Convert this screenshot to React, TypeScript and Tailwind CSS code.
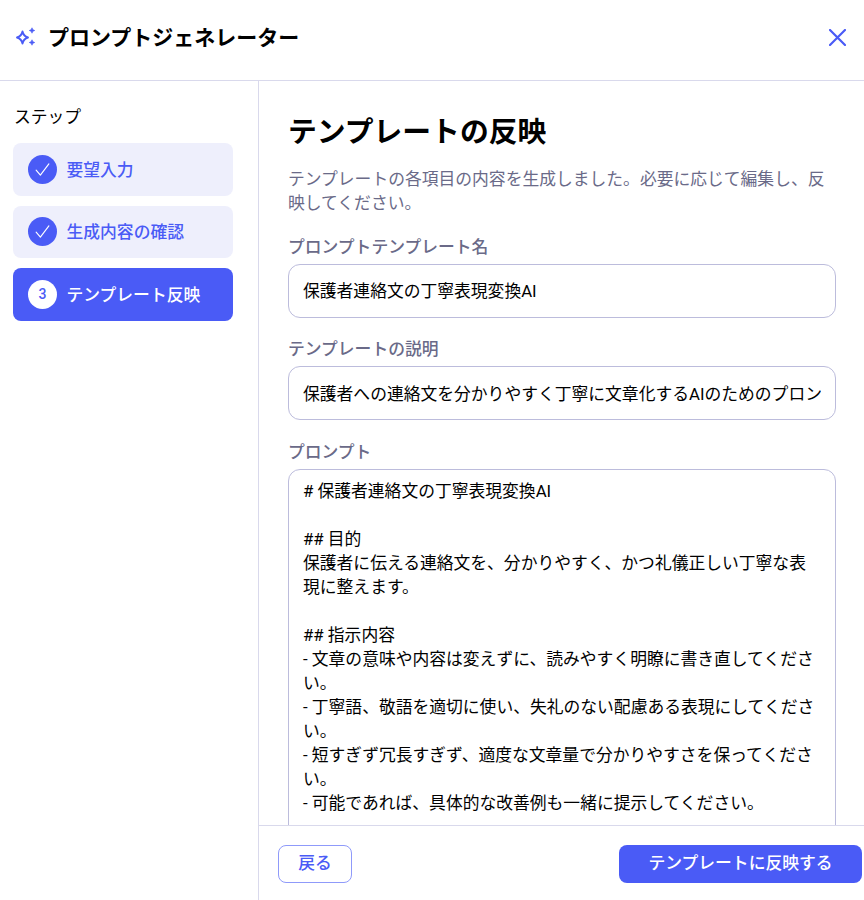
import React from "react";

const FONT = "font-['Roboto','Noto_Sans_CJK_JP',sans-serif]";

const PROMPT = `# 保護者連絡文の丁寧表現変換AI

## 目的
保護者に伝える連絡文を、分かりやすく、かつ礼儀正しい丁寧な表現に整えます。

## 指示内容
- 文章の意味や内容は変えずに、読みやすく明瞭に書き直してください。
- 丁寧語、敬語を適切に使い、失礼のない配慮ある表現にしてください。
- 短すぎず冗長すぎず、適度な文章量で分かりやすさを保ってください。
- 可能であれば、具体的な改善例も一緒に提示してください。

## 入力
{{連絡文}}`;

function Check() {
  return (
    <svg width="17" height="17" viewBox="0 0 24 24" fill="none" stroke="white" strokeWidth="1.6" strokeLinecap="round" strokeLinejoin="round">
      <path d="M3 13l6 7L21 4" />
    </svg>
  );
}

function Step({ label, state, n }: { label: string; state: "done" | "active"; n?: number }) {
  const active = state === "active";
  return (
    <div className={`flex h-[52.5px] items-center gap-[9.5px] rounded-lg pl-[15px] ${active ? "bg-[#4a5bf6] text-white" : "bg-[#eeeffc] text-[#4a5bf6]"}`}>
      <div className={`flex h-[29px] w-[29px] items-center justify-center rounded-full ${active ? "bg-white text-[#4a5bf6]" : "bg-[#4a5bf6]"}`}>
        {active ? <span className="text-[14px] font-medium">{n}</span> : <Check />}
      </div>
      <span className="pt-px text-[16.8px] leading-6 font-medium">{label}</span>
    </div>
  );
}

function Label({ children }: { children: React.ReactNode }) {
  return <label className="mb-[5px] block text-[16.8px] leading-6 font-medium text-[#6a6a88]">{children}</label>;
}

export default function App() {
  return (
    <div className={`flex h-[900px] w-[864px] flex-col overflow-hidden bg-white text-black ${FONT}`}>
      <header className="flex h-[81px] shrink-0 items-center justify-between border-b border-b-[#d9d9ec] pr-[18px] pb-[6px] pl-[15px]">
        <div className="flex items-center gap-[12px]">
          <svg width="21" height="21" viewBox="0 0 21 21" fill="none">
            <path d="M7.5 4.5 C8.2 8.2 9.4 9.4 13 10.5 C9.4 11.6 8.2 12.8 7.5 16.5 C6.8 12.8 5.6 11.6 2 10.5 C5.6 9.4 6.8 8.2 7.5 4.5 Z" stroke="#4a5bf6" strokeWidth="1.9" strokeLinejoin="round" />
            <path d="M17 0.8 C17.4 2.4 17.9 2.9 19.7 3.5 C17.9 4.1 17.4 4.6 17 6.2 C16.6 4.6 16.1 4.1 14.3 3.5 C16.1 2.9 16.6 2.4 17 0.8 Z" fill="#4a5bf6" stroke="#4a5bf6" strokeWidth="0.7" strokeLinejoin="round" />
            <path d="M17 12.8 C17.4 14.4 17.9 14.9 19.7 15.5 C17.9 16.1 17.4 16.6 17 18.2 C16.6 16.6 16.1 16.1 14.3 15.5 C16.1 14.9 16.6 14.4 17 12.8 Z" fill="#4a5bf6" stroke="#4a5bf6" strokeWidth="0.7" strokeLinejoin="round" />
          </svg>
          <h1 className="pt-[2px] text-[21px] leading-none font-bold">プロンプトジェネレーター</h1>
        </div>
        <svg width="17" height="17" viewBox="0 0 17 17" fill="none" stroke="#4a5bf6" strokeWidth="2.2" strokeLinecap="round">
          <path d="M1 1l15 15M16 1L1 16" />
        </svg>
      </header>

      <div className="flex min-h-0 flex-1">
        <aside className="w-[259px] shrink-0 border-r border-r-[#d9d9ec] pt-[24px] pr-[25px] pl-[13px]">
          <div className="mb-[14px] pl-px text-[16.8px] leading-6">ステップ</div>
          <div className="flex flex-col gap-[10px]">
            <Step label="要望入力" state="done" />
            <Step label="生成内容の確認" state="done" />
            <Step label="テンプレート反映" state="active" n={3} />
          </div>
        </aside>

        <main className="flex min-w-0 flex-1 flex-col">
          <div className="min-h-0 flex-1 overflow-hidden pt-[31px] pr-[28px] pl-[29px]">
            <h2 className="mb-[15px] text-[28.8px] leading-10 font-bold">テンプレートの反映</h2>
            <p className="mb-[20px] text-[16.8px] leading-6 text-[#6a6a88]">
              テンプレートの各項目の内容を生成しました。必要に応じて編集し、反映してください。
            </p>
            <Label>プロンプトテンプレート名</Label>
            <input
              readOnly
              value="保護者連絡文の丁寧表現変換AI"
              className="mb-[19px] block h-[54px] w-full rounded-xl border border-[#bcbcdc] px-[14px] pb-[2px] text-[16.8px] outline-none"
            />
            <Label>テンプレートの説明</Label>
            <input
              readOnly
              value="保護者への連絡文を分かりやすく丁寧に文章化するAIのためのプロンプトテンプレートです。"
              className="mb-[20px] block h-[54px] w-full rounded-xl border border-[#bcbcdc] px-[14px] text-[16.8px] outline-none"
            />
            <Label>プロンプト</Label>
            <textarea
              readOnly
              value={PROMPT}
              className="block h-[480px] w-full resize-none overflow-hidden rounded-xl border border-[#bcbcdc] px-[14px] pt-[9px] pb-[10px] text-[16.8px] leading-6 outline-none"
            />
          </div>
          <footer className="flex h-[75px] shrink-0 items-start justify-between border-t border-t-[#d9d9ec] pt-[19px] pr-[2px] pl-[19px]">
            <button className="h-[38px] w-[74px] rounded-lg border border-[#8f9afa] bg-white text-[16.8px] font-medium text-[#4a5bf6]">戻る</button>
            <button className="h-[38px] w-[243px] rounded-lg bg-[#4a5bf6] text-[16.8px] font-medium text-white">テンプレートに反映する</button>
          </footer>
        </main>
      </div>
    </div>
  );
}
